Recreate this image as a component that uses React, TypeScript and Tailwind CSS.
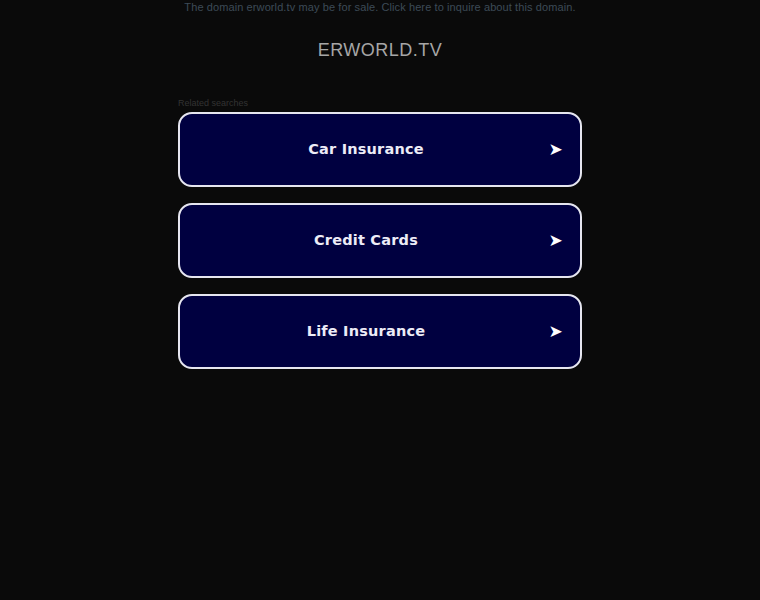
import React from 'react';

const links = ['Car Insurance', 'Credit Cards', 'Life Insurance'];

const App: React.FC = () => {
  return (
    <div className="min-h-[600px] w-full bg-[#0a0a0a] pt-[1px] font-['Liberation_Sans',Arial,sans-serif]">
      <div className="text-center text-[11px] leading-[13px] tracking-[0.1px] text-[#3d4a57]">
        The domain erworld.tv may be for sale. Click here to inquire about this domain.
      </div>
      <h1 className="mt-[24px] text-center text-[18px] leading-[24px] tracking-[0.5px] text-[#a6a6a6]">ERWORLD.TV</h1>

      <div className="mx-auto mt-[35px] w-[404px]">
        <div className="text-[9px] leading-[12px] text-[#333333]">Related searches</div>
        <div className="mt-[3px] flex flex-col gap-[16px]">
          {links.map((label) => (
            <a
              key={label}
              href="#"
              className="relative flex h-[75px] items-center justify-center rounded-[14px] border-2 border-[#e6e6f0] bg-[#000040] pt-[1px] font-['DejaVu_Sans',sans-serif] text-[14.5px] font-bold tracking-[0.2px] text-[#ececf7]"
            >
              <span className="-ml-[28px]">{label}</span>
              <span className="absolute right-[17px] top-1/2 -translate-y-1/2 text-[17px] text-white">➤</span>
            </a>
          ))}
        </div>
      </div>
    </div>
  );
};

export default App;
